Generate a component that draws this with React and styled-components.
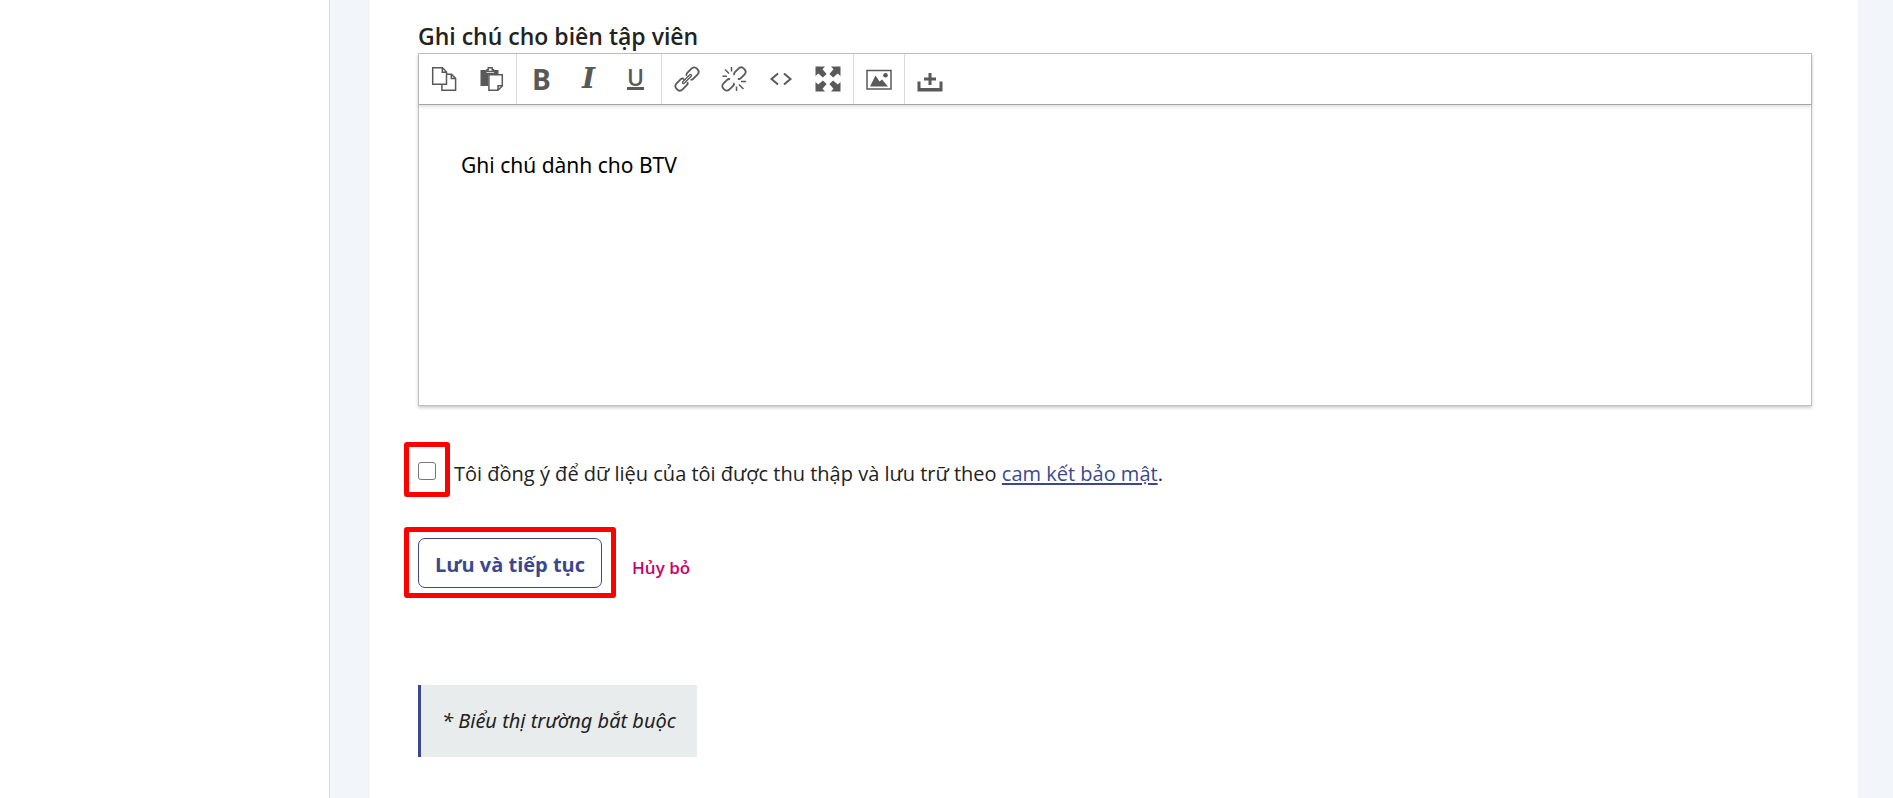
import React from "react";
import styled, { createGlobalStyle } from "styled-components";

const GlobalStyle = createGlobalStyle`
  * {
    box-sizing: border-box;
  }

  body {
    margin: 0;
    background: #fff;
    color: #222;
    font-family: "Open Sans", "Noto Sans", sans-serif;
  }
`;

const Layout = styled.div`
  display: grid;
  grid-template-columns: 330px 1fr;
  min-height: 100vh;
`;

const Sidebar = styled.aside`
  border-right: 1px solid #d9dee5;
`;

const Content = styled.main`
  padding: 0 35px 0 40px;
  background: #f2f6fb;
`;

const Form = styled.form`
  height: 100%;
  padding: 20px 46px 40px 48px;
  background: #fff;
`;

const FieldLabel = styled.label`
  display: block;
  padding-bottom: 1px;
  font-size: 23px;
  font-weight: 600;
  line-height: 32px;
`;

const Editor = styled.div`
  border: 1px solid #bfbfbf;
  box-shadow: 0 2px 3px rgba(0, 0, 0, 0.2);
`;

const Toolbar = styled.div`
  display: flex;
  height: 51px;
  border-bottom: 1px solid #a6a6a6;
  box-shadow: 0 2px 3px rgba(0, 0, 0, 0.12);
`;

const ToolGroup = styled.div`
  display: flex;
  padding: 0 2px 0 1px;
  border-right: 1px solid #d9d9d9;

  &:last-child {
    border-right: 0;
  }
`;

const ToolButton = styled.button`
  display: flex;
  align-items: center;
  justify-content: center;
  width: 47px;
  padding: 0 0 1px;
  border: 0;
  background: none;
  color: #595959;
`;

const Icon = styled.svg`
  width: 24px;
  height: 24px;
  overflow: visible;
  fill: none;
  stroke: currentColor;
  stroke-width: 1.5;
`;

const BoldMark = styled.b`
  font-family: "Open Sans", sans-serif;
  font-size: 28px;
  line-height: 28px;
`;

const ItalicMark = styled.i`
  font-family: "DejaVu Serif", serif;
  font-size: 28px;
  font-weight: 700;
  line-height: 28px;
`;

const UnderlineMark = styled.span`
  border-bottom: 3px solid currentColor;
  font-family: "Open Sans", sans-serif;
  font-size: 23px;
  font-weight: 600;
  line-height: 20px;
`;

const NoteArea = styled.textarea`
  display: block;
  width: 100%;
  height: 300px;
  padding: 44px 42px;
  border: 0;
  outline: 0;
  background: transparent;
  color: #000;
  font-family: "Noto Sans", sans-serif;
  font-size: 21px;
  line-height: 32px;
  resize: none;
`;

const ConsentRow = styled.div`
  display: flex;
  align-items: flex-start;
  margin-top: 50px;
  font-size: 20px;
  line-height: 32px;
`;

// red frame round the control the reader has to use
const Highlight = styled.span`
  position: relative;
  display: flex;

  &::after {
    content: "";
    position: absolute;
    inset: ${(props) => props.$inset};
    border: 5px solid #fe0000;
    border-radius: 3px;
    pointer-events: none;
  }
`;

const CheckboxHighlight = styled(Highlight)`
  margin-top: 6px;
`;

const Checkbox = styled.input`
  appearance: none;
  width: 18px;
  height: 18px;
  margin: 0;
  border: 1px solid #767676;
  border-radius: 3px;
  background: #fff;

  &:checked {
    background: #3b4890;
  }
`;

const ConsentText = styled.span`
  padding: 2px 0 0 18px;
`;

const PolicyLink = styled.a`
  color: #3b4890;
  text-decoration: underline;
  text-decoration-thickness: 2px;
  text-underline-offset: 2px;
`;

const Actions = styled.div`
  display: flex;
  align-items: center;
  gap: 30px;
  margin-top: 48px;
`;

const SaveButton = styled.button`
  height: 50px;
  padding: 2px 16px 0;
  border: 1px solid #3b4890;
  border-radius: 7px;
  background: #fff;
  color: #3b4890;
  font-family: inherit;
  font-size: 20px;
  font-weight: 700;
`;

const CancelButton = styled.button`
  padding: 8px 0 0;
  border: 0;
  background: none;
  color: #c9006b;
  font-family: inherit;
  font-size: 17px;
  font-weight: 600;
`;

const RequiredNote = styled.p`
  width: fit-content;
  margin: 97px 0 0;
  padding: 20px 21px;
  border-left: 3px solid #3b4890;
  background: #e8ecec;
  font-family: "Noto Sans", sans-serif;
  font-size: 20px;
  font-style: italic;
  line-height: 32px;
`;

const CopyIcon = () => (
  <Icon viewBox="0 0 24 24">
    <path d="M.7.8H10.5L14.5 5V17.3H.7ZM10.3.8V5.2H14.5" />
    <path d="M14.5 7.2H19.5L23.6 11.4V23.3H9.9V17.5M19.3 7.2V11.6H23.6" />
  </Icon>
);

const PasteIcon = () => (
  <Icon viewBox="0 0 24 24">
    <path d="M1.5 3H7.5V6H15V3H19.5V7H9V19H1.5Z" fill="currentColor" stroke="none" />
    <path d="M8 4.5V2.8H9.3V.8H13.2V2.8H14.5V4.5Z" />
    <path d="M9.9 7.7H23.3V19L19 23.3H9.9ZM23.3 18.8H19V23.3" fill="#fff" />
  </Icon>
);

const LinkIcon = () => (
  <Icon viewBox="0 0 24 24">
    <g transform="rotate(-45 12 12)" strokeWidth="1.8">
      <path d="M9.5 9.2V10.5M9.8 9.2Q9.5 7.8 7.5 7.8H1.5Q-2.4 7.8-2.4 12T1.5 16.2H7.5Q9.8 16.2 10.2 14.3" />
      <path d="M14.2 14.8Q14.5 16.2 16.5 16.2H22.5Q26.4 16.2 26.4 12T22.5 7.8H16.5Q14.2 7.8 13.8 9.7" />
      <rect x="6" y="11" width="12" height="2" rx="1" strokeWidth="1.3" />
    </g>
  </Icon>
);

const UnlinkIcon = () => (
  <Icon viewBox="0 0 24 24">
    <g transform="rotate(-45 12 12)" strokeWidth="1.8">
      <path d="M9 14.5Q8.5 16.2 6.5 16.2H1.5Q-2.4 16.2-2.4 12T1.5 7.8H6.5Q8.5 7.8 9 9.5" />
      <path d="M15 9.5Q15.5 7.8 17.5 7.8H22.5Q26.4 7.8 26.4 12T22.5 16.2H17.5Q15.5 16.2 15 14.5" />
    </g>
    <path d="M9.5 0V4.5M3 2.5L7 6.5M.5 9.3H5M14.5 19.5V24M17 17.5L21.5 22M19 14.5H24" />
  </Icon>
);

const CodeIcon = () => (
  <Icon viewBox="0 0 24 24">
    <path d="M9 6.5L2.5 12L9 17.5M15 6.5L21.5 12L15 17.5" strokeWidth="2" />
  </Icon>
);

const ExpandIcon = () => (
  <Icon viewBox="0 0 24 24">
    {[0, 90, 180, 270].map((angle) => (
      <path
        key={angle}
        transform={`rotate(${angle} 12 12)`}
        d="M-.5-.5H9L6.5 2.3L10.6 6.9L6.9 10.6L2.3 6.5L-.5 9Z"
        fill="currentColor"
        stroke="none"
      />
    ))}
  </Icon>
);

const ImageIcon = () => (
  <Icon viewBox="0 0 24 24">
    <rect x="0" y="3.5" width="24" height="18.5" />
    <path d="M3 19.5L8.5 8.5L12.5 14.5L15 12.5L21 19.5Z" fill="currentColor" stroke="none" />
    <circle cx="18.5" cy="8.3" r="2.3" fill="currentColor" stroke="none" />
  </Icon>
);

const UploadIcon = () => (
  <Icon viewBox="0 0 24 24">
    <path d="M-.5 14.5H2.5V21H21.5V14.5H24.5V24.5H-.5Z" fill="currentColor" stroke="none" />
    <path d="M12 6V18M6 12H18" strokeWidth="3" />
  </Icon>
);

const toolGroups = [
  [
    { label: "Copy", mark: <CopyIcon /> },
    { label: "Paste", mark: <PasteIcon /> },
  ],
  [
    { label: "Bold", mark: <BoldMark>B</BoldMark> },
    { label: "Italic", mark: <ItalicMark>I</ItalicMark> },
    { label: "Underline", mark: <UnderlineMark>U</UnderlineMark> },
  ],
  [
    { label: "Insert link", mark: <LinkIcon /> },
    { label: "Remove link", mark: <UnlinkIcon /> },
    { label: "Source code", mark: <CodeIcon /> },
    { label: "Fullscreen", mark: <ExpandIcon /> },
  ],
  [{ label: "Insert image", mark: <ImageIcon /> }],
  [{ label: "Upload", mark: <UploadIcon /> }],
];

const App = () => {
  return (
    <>
      <GlobalStyle />
      <Layout>
        <Sidebar />
        <Content>
          <Form onSubmit={(e) => e.preventDefault()}>
            <FieldLabel htmlFor="note">Ghi chú cho biên tập viên</FieldLabel>
            <Editor>
              <Toolbar>
                {toolGroups.map((tools) => (
                  <ToolGroup key={tools[0].label}>
                    {tools.map((tool) => (
                      <ToolButton key={tool.label} type="button" aria-label={tool.label}>
                        {tool.mark}
                      </ToolButton>
                    ))}
                  </ToolGroup>
                ))}
              </Toolbar>
              <NoteArea id="note" defaultValue="Ghi chú dành cho BTV" />
            </Editor>
            <ConsentRow>
              <CheckboxHighlight $inset="-20px -14px -17px">
                <Checkbox id="consent" type="checkbox" />
              </CheckboxHighlight>
              <ConsentText>
                <label htmlFor="consent">
                  Tôi đồng ý để dữ liệu của tôi được thu thập và lưu trữ theo{" "}
                </label>
                <PolicyLink href="#privacy">cam kết bảo mật</PolicyLink>.
              </ConsentText>
            </ConsentRow>
            <Actions>
              <Highlight $inset="-11px -14px -10px">
                <SaveButton type="submit">Lưu và tiếp tục</SaveButton>
              </Highlight>
              <CancelButton type="button">Hủy bỏ</CancelButton>
            </Actions>
            <RequiredNote>* Biểu thị trường bắt buộc</RequiredNote>
          </Form>
        </Content>
      </Layout>
    </>
  );
};

export default App;
